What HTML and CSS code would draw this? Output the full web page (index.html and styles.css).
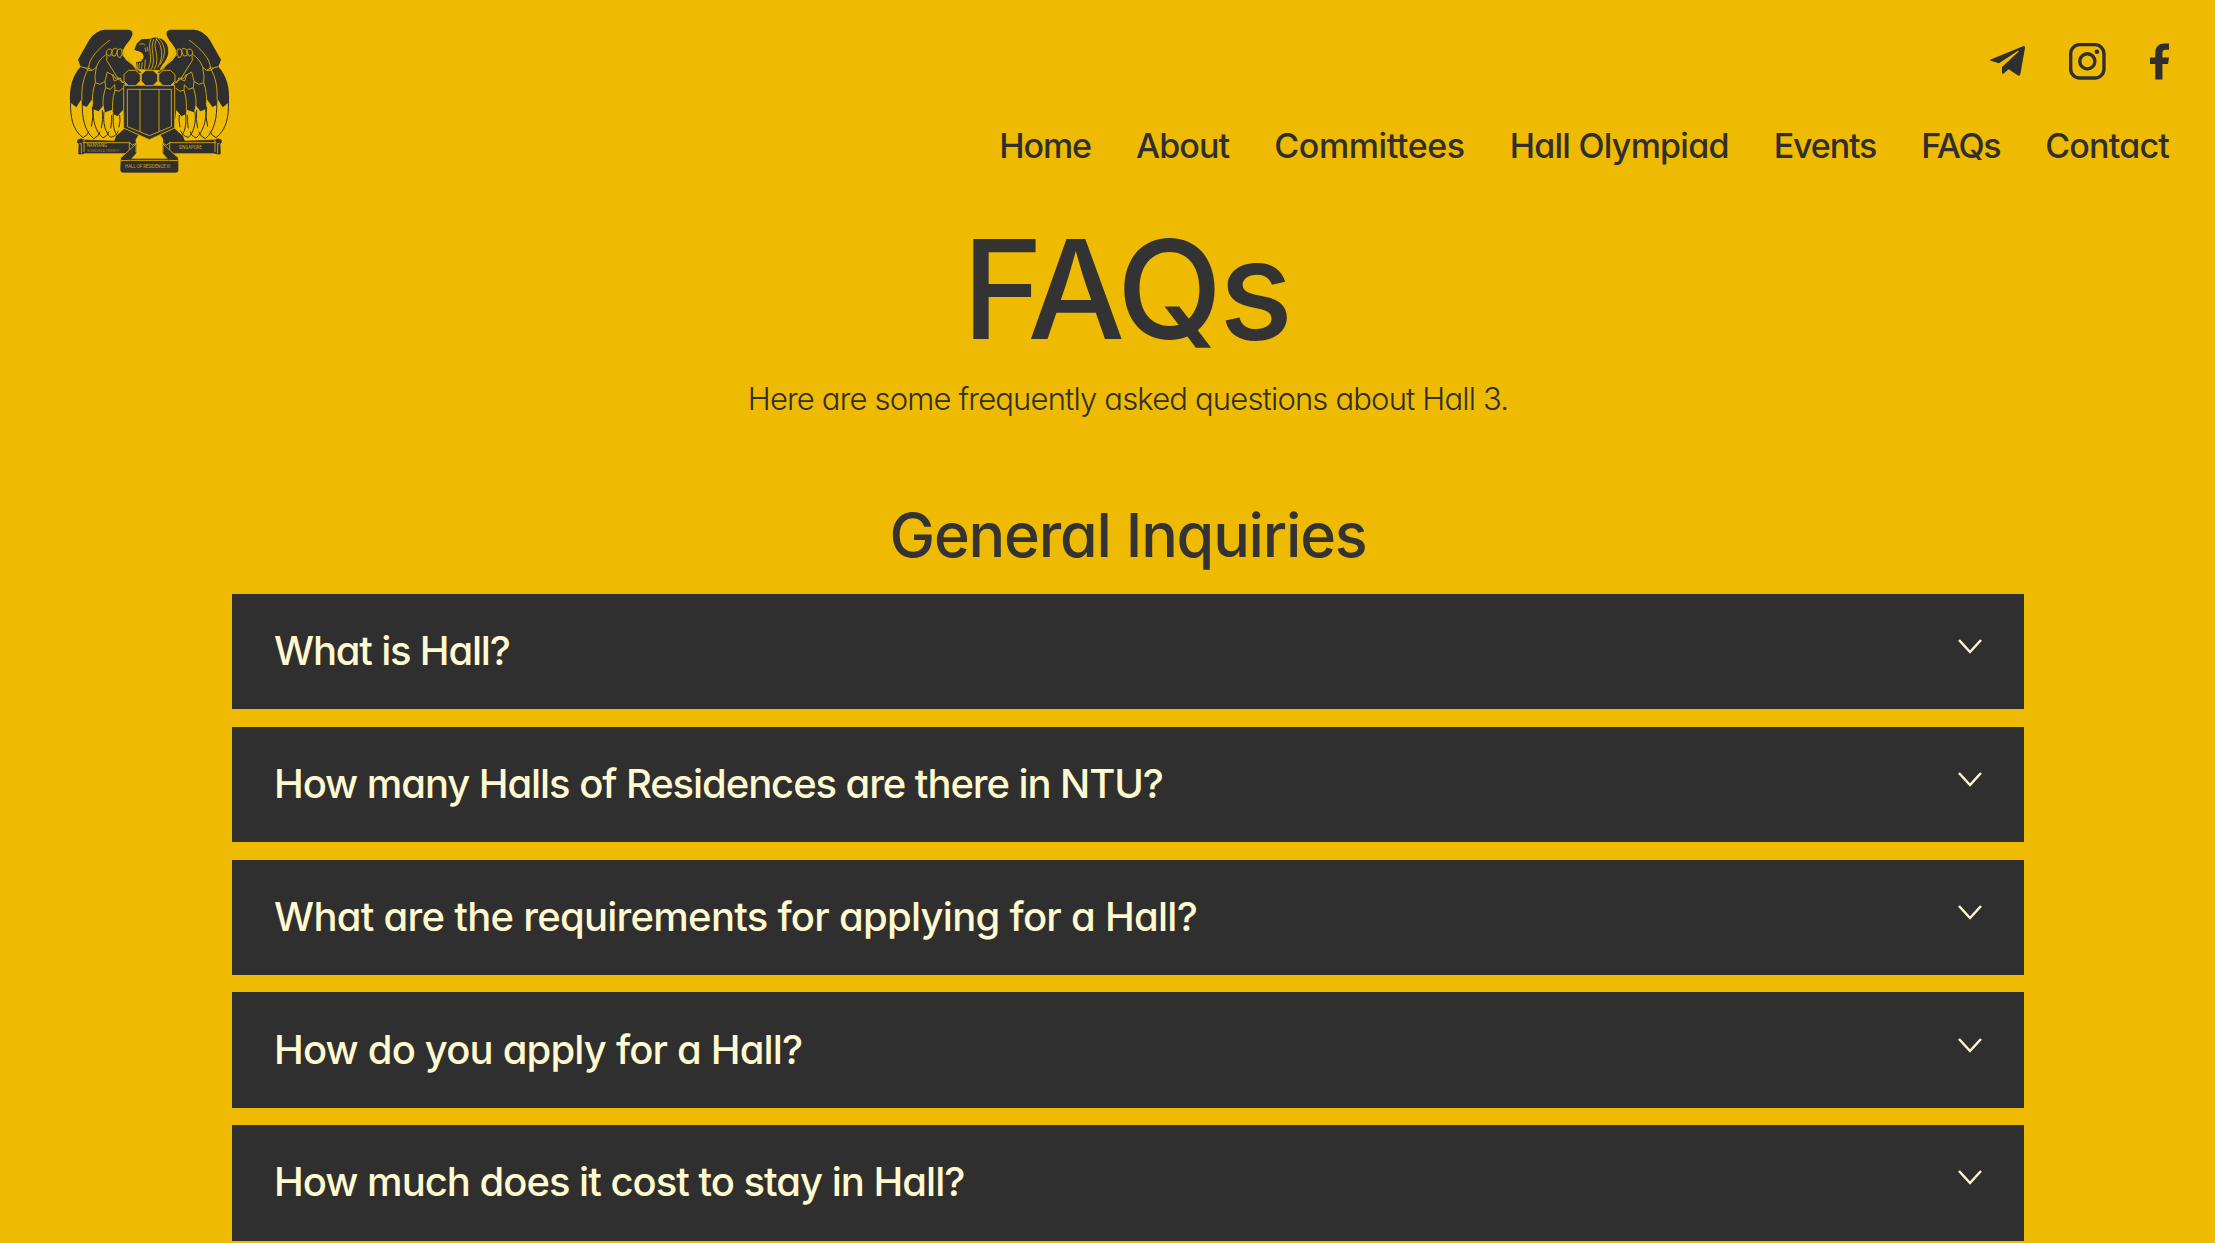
FILE: index.html
```
<!DOCTYPE html>
<html lang="en">
<head>
<meta charset="utf-8">
<title>FAQs</title>
<link rel="stylesheet" href="styles.css">
</head>
<body>
<header class="header">
  <a class="logo" aria-label="Hall of Residence III">
    <svg class="crest" viewBox="0 0 600 540">
      <defs>
        <g id="wing">
          <path class="quill" d="M62 275C60 320 68 360 99 383Q114 375 117 364M97 275C95 325 105 365 131 386Q148 378 150 365M130 295C126 330 138 367 159 384Q175 377 177 364M162 305C158 340 166 368 182 382Q200 378 205 362M190 310C188 340 190 370 209 384Q222 376 227 360M127 290Q132 320 124 350M157 300Q160 330 154 355M185 315Q186 335 182 355M209 315Q212 330 207 352"/>
          <path class="solid" d="M165 59H236Q252 62 246 78C238 98 220 106 217 131L228 150L276 188L225 198V352L218 300L203 319L190 312L187 299L165 307L160 286L146 304L129 297L127 267L110 291L97 285L94 268L79 292L60 277C58 232 66 198 92 170L84 149L118 89Q139 60 165 59Z"/>
          <path class="line" d="M180 90C145 115 115 148 116 174L127 181L139 172C145 153 158 140 170 133M92 170L106 174L116 174M116 174C98 205 94 238 96 270M139 172Q133 198 136 218L150 223L165 214Q169 196 172 186M136 218C128 240 126 263 128 282M165 214L167 233L181 238L194 224M167 233C158 260 158 280 160 291M194 224L195 240L207 244L220 234M195 240C187 265 187 286 188 302M106 174L116 181L127 181M172 186L187 195L193 213L211 204L216 218L227 213M188 192L196 205L208 204M171 136L170 151L205 207L228 223M216 134L277 191M218 121L264 187"/>
          <path class="line" d="M169 132Q168 117 181 117Q187 117 186 126Q187 114 198 115Q205 116 201 127Q205 112 215 118Q219 133 211 143L204 140L201 127L196 138L186 137L186 126L179 139Z"/>
          <path class="solid" d="M224 355L198 379L191 397L250 400L266 374Z"/>
          <path class="solid edge" d="M83 390L94 386L102 390L240 395L244 388L255 388L258 404L244 429H105L95 432H86L87 402L83 398Z"/>
          <path class="line" d="M88 401H94V430M102 390V426M98 398H238V427M236 396L247 405L258 400"/>
          <path class="solid edge" d="M258 402V429L239 451L214 453V442Z"/>
          <path class="line" d="M214 442L258 402V427"/>
        </g>
      </defs>
      <use href="#wing"/>
      <use href="#wing" transform="matrix(-1 0 0 1 597 0)"/>
      <path class="solid" d="M261 177L258 157L274 154L281 140Q275 127 263 124L253 119L260 101L274 88L302 86Q317 78 335 87Q357 98 355 129C351 154 333 164 329 181Z"/>
      <path class="gap" d="M253 126Q270 119 279 132Q282 145 273 151L258 153V147L264 145L259 140Z"/>
      <path class="line" d="M303 88C290 115 312 137 295 177M312 87C296 115 321 143 304 178M320 86C304 115 334 135 313 178M318 85C337 107 342 139 323 173M324 84C350 107 347 137 330 164M285 113L288 126M291 110L294 124M268 103L280 101L285 106M262 158V177M269 159L266 177M277 157L274 177M286 149L284 177"/>
      <path class="solid line" d="M221 226H374V354L298 389L221 354Z"/>
      <path class="line" d="M232 238H364V350L298 377L232 350ZM270 238V365M327 238V365"/>
      <path class="solid line" d="M235 181H257L271 194V213L257 227H235L222 213V194ZM287 181H309L323 194V213L309 227H287L274 213V194ZM339 181H361L375 194V213L361 227H339L326 213V194Z"/>
      <path class="solid edge" d="M213 452L240 447H356L384 452V481Q384 487 378 487H220Q212 487 212 480Z"/>
      <path class="line" d="M213 452L241 451H356L384 452"/>
      <text class="motto" x="110" y="411" textLength="61" lengthAdjust="spacingAndGlyphs">NANYANG</text>
      <text class="motto small" x="110" y="426" textLength="97" lengthAdjust="spacingAndGlyphs">TECHNOLOGICAL UNIVERSITY</text>
      <text class="motto" x="386" y="417" textLength="69" lengthAdjust="spacingAndGlyphs">SINGAPORE</text>
      <text class="motto" x="225" y="473" textLength="136" lengthAdjust="spacingAndGlyphs">HALL OF RESIDENCE III</text>
    </svg>
  </a>
  <div class="menu">
    <div class="social">
      <svg class="telegram" viewBox="0 0 105 90"><path d="M0 41L101 0Q106 0 105 6L91 85Q89 91 83 88L56 70L39 84Q37 85 36 80V63L87 16Q86 13 82 16L27 52L2 44Q0 43 0 41Z"/></svg>
      <svg class="instagram" viewBox="0 0 110 110"><rect x="5" y="5" width="99" height="99" rx="27"/><circle cx="54.500" cy="54.500" r="22.500"/><circle class="dot" cx="83" cy="26" r="7"/></svg>
      <svg class="facebook" viewBox="0 0 58 110"><path d="M16 110V63H0V43H16V29Q16 0 44 0H58V19H47Q38 19 38 28V43H58L55 63H38V110Z"/></svg>
    </div>
    <nav class="nav">
      <a class="home">Home</a><a class="about">About</a><a class="committees">Committees</a><a class="olympiad">Hall Olympiad</a><a class="events">Events</a><a class="faqs">FAQs</a><a class="contact">Contact</a>
    </nav>
  </div>
</header>
<main class="main">
  <h1 class="title">FAQs</h1>
  <p class="intro">Here are some frequently asked questions about Hall 3.</p>
  <h2 class="section">General Inquiries</h2>
  <div class="accordion">
    <div class="item"><span class="q1">What is Hall?</span><svg class="chevron" viewBox="0 0 24 15"><path d="M1 1L12 13L23 1"/></svg></div>
    <div class="item"><span class="q2">How many Halls of Residences are there in NTU?</span><svg class="chevron" viewBox="0 0 24 15"><path d="M1 1L12 13L23 1"/></svg></div>
    <div class="item"><span class="q3">What are the requirements for applying for a Hall?</span><svg class="chevron" viewBox="0 0 24 15"><path d="M1 1L12 13L23 1"/></svg></div>
    <div class="item"><span class="q4">How do you apply for a Hall?</span><svg class="chevron" viewBox="0 0 24 15"><path d="M1 1L12 13L23 1"/></svg></div>
    <div class="item"><span class="q5">How much does it cost to stay in Hall?</span><svg class="chevron" viewBox="0 0 24 15"><path d="M1 1L12 13L23 1"/></svg></div>
  </div>
</main>
</body>
</html>
```
FILE: styles.css
```
* { box-sizing: border-box; }
body {
  margin: 0;
  background: #efba02;
  color: #2f2f2f;
  font-family: Inter, "Liberation Sans", sans-serif;
  font-feature-settings: "cv11";
}
h1, h2, p { margin: 0; }

.header {
  display: flex;
  justify-content: space-between;
  height: 219px;
  padding: 10px 46px 0 50px;
}
.crest { display: block; width: 200px; height: 180px; }
.solid { fill: #2f2f2f; }
.edge { stroke: #2f2f2f; stroke-width: 2; stroke-linejoin: round; }
.line { stroke: #d5a609; stroke-width: 2.8; stroke-linejoin: round; }
.line:not(.solid) { fill: none; }
.quill { fill: none; stroke: #2f2f2f; stroke-width: 3; }
.gap { fill: #efba02; }
.motto { fill: #d5a609; font: 400 17px Roboto, sans-serif; }
.motto.small { font-size: 9px; fill: #a8840f; }

.menu { display: flex; flex-direction: column; align-items: flex-end; padding-top: 33px; }
.social { display: flex; height: 37px; }
.social svg { fill: #2f2f2f; }
.telegram { width: 35px; height: 30px; margin: 3px 44px 0 0; }
.instagram { width: 37px; height: 37px; margin-right: 44px; }
.instagram rect, .instagram circle { fill: none; stroke: #2f2f2f; stroke-width: 10; }
.social .instagram .dot { fill: #2f2f2f; stroke: none; }
.facebook { width: 19px; height: 37px; }

.nav {
  display: flex;
  gap: 45px;
  margin-top: 45.5px;
  font-size: 34px;
  font-weight: 500;
  line-height: 40px;
}
.home { letter-spacing: -1.12px; }
.about { letter-spacing: -0.85px; }
.committees { letter-spacing: -0.42px; }
.olympiad { letter-spacing: -0.75px; }
.events { letter-spacing: -1.15px; }
.faqs { letter-spacing: -1.32px; }
.contact { letter-spacing: -0.8px; }

.main { width: 1792px; margin-left: 232px; text-align: center; }
.title {
  padding-right: 4px;
  color: #333;
  font-size: 137.5px;
  font-weight: 500;
  line-height: 140px;
  letter-spacing: -3.3px;
}
.intro {
  margin-top: 20px;
  font-size: 31px;
  font-weight: 300;
  line-height: 40px;
  letter-spacing: -0.83px;
}
.section {
  margin: 81px 0 24px;
  color: #333;
  font-size: 61px;
  font-weight: 500;
  line-height: 70px;
  letter-spacing: -1.2px;
}
.accordion { display: grid; gap: 17.4px; }
.item {
  display: flex;
  align-items: center;
  justify-content: space-between;
  height: 115.4px;
  padding: 0 42px 2px 42px;
  background: #2f2f2f;
  color: #fff9d0;
  font-size: 40px;
  font-weight: 500;
}
.chevron {
  width: 24px;
  height: 15px;
  margin-bottom: 8px;
  fill: none;
  stroke: #fff9d0;
  stroke-width: 2.5;
}
.q1 { letter-spacing: -1.2px; }
.q2 { letter-spacing: -1.08px; }
.q3 { letter-spacing: -0.73px; }
.q4 { letter-spacing: -0.83px; }
.q5 { letter-spacing: -1px; }
```
